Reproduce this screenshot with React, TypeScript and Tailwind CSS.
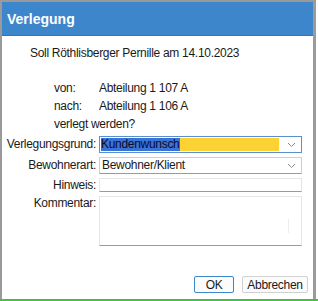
import React from "react";

const Chevron = () => (
  <svg width="9" height="6" viewBox="0 0 9 6" className="shrink-0">
    <path d="M1 1 L4.5 4.5 L8 1" fill="none" stroke="#8a8a8a" strokeWidth="1" />
  </svg>
);

export default function App() {
  return (
    <div
      className="w-[318px] h-[301px] bg-white flex flex-col overflow-hidden text-[12px] tracking-[-0.3px] text-[#1a1a1a]"
      style={{ fontFamily: '"Liberation Sans", Arial, sans-serif' }}
    >
      <div className="flex-1 flex flex-col border-l-2 border-r-[3px] border-t-2 border-[#9a9a9a] mr-[2px]">
        <div className="h-[34px] bg-[#3d86cc] border-b border-[#3574b4] flex items-center pl-[5px] pt-[2px]">
          <span className="text-white font-bold text-[14px] tracking-normal">Verlegung</span>
        </div>
        <div className="flex-1 flex flex-col">
          <div className="pl-[28px] pt-[10px] h-[28px] leading-[14px]">
            Soll Röthlisberger Pernille am 14.10.2023
          </div>
          <div className="pl-[52px] pt-[17px] flex flex-col gap-[4px] leading-[14px]">
            <div className="grid grid-cols-[45px_auto]">
              <span>von:</span>
              <span>Abteilung 1 107 A</span>
            </div>
            <div className="grid grid-cols-[45px_auto]">
              <span>nach:</span>
              <span>Abteilung 1 106 A</span>
            </div>
            <div>verlegt werden?</div>
          </div>
          <div className="mt-[5px] grid grid-cols-[93px_203px] gap-x-[3px] gap-y-[4px] items-start pl-[1px]">
            <span className="text-right leading-[17px]">Verlegungsgrund:</span>
            <div className="h-[17px] border border-[#5b8fd0] flex items-center pl-[1px] pr-[5px]">
              <div className="flex-1 flex h-[13px] items-center">
                <span className="bg-[#3a73d6] text-[#0a0a2a] leading-[13px] pr-[1px]">Kundenwunsch</span>
                <span className="flex-1 h-[13px] bg-[#fcd234] mr-[8px]" />
              </div>
              <Chevron />
            </div>
            <span className="text-right leading-[17px]">Bewohnerart:</span>
            <div className="h-[17px] border border-[#cfcfcf] border-b-[#9a9a9a] flex items-center pl-[2px] pr-[5px]">
              <span className="flex-1 leading-[13px]">Bewohner/Klient</span>
              <Chevron />
            </div>
            <span className="text-right leading-[14px]">Hinweis:</span>
            <div className="h-[14px] border border-[#e6e6e6] border-b-[#9a9a9a]" />
            <span className="text-right leading-[14px]">Kommentar:</span>
            <div className="h-[50px] border border-[#e6e6e6] border-b-[#9a9a9a] relative">
              <div className="absolute right-[12px] top-[22px] w-[1px] h-[14px] bg-[#ededed]" />
            </div>
          </div>
          <div className="flex-1" />
          <div className="flex justify-end gap-[8px] pr-[5px] pb-[6px]">
            <button className="w-[40px] h-[17px] border border-[#3d86cc] rounded-[2px] bg-[#fbfbfb] text-[12px] leading-[14px]">
              OK
            </button>
            <button className="w-[66px] h-[17px] border border-[#d0d0d0] rounded-[2px] bg-[#fbfbfb] text-[12px] leading-[14px]">
              Abbrechen
            </button>
          </div>
        </div>
      </div>
      <div className="h-[2px] bg-[#3fc43f]" />
    </div>
  );
}
